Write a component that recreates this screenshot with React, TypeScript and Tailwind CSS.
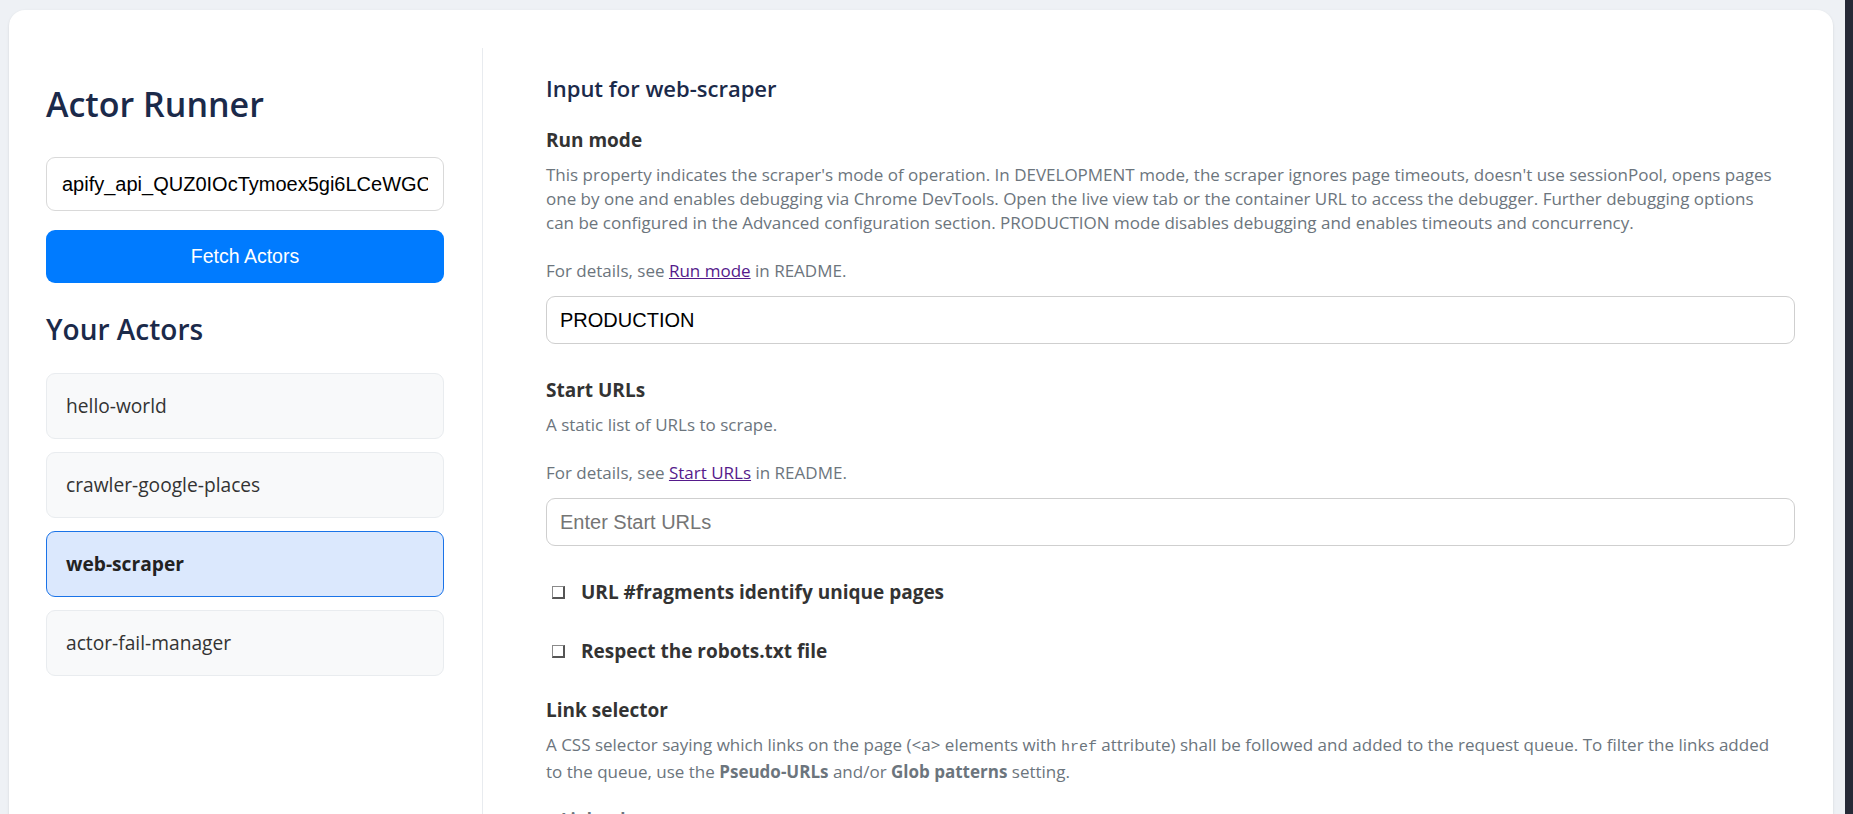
import React, { useState } from "react";

const actors = [
  "hello-world",
  "crawler-google-places",
  "web-scraper",
  "actor-fail-manager",
];

const sans = "font-['Segoe_UI','Open_Sans',sans-serif]";
const arial = "font-['Liberation_Sans',Arial,sans-serif]";
const mono = "font-['Liberation_Mono',monospace]";

const Checkbox = ({ label }: { label: string }) => (
  <div className="flex items-center h-[27px] mb-[32px]">
    <span className="ml-[6px] w-[13px] h-[13px] border border-[#8a8a8a] border-b-2 border-r-2 border-b-[#555] border-r-[#555] bg-white" />
    <span className="ml-[16px] text-[19px] leading-[27px] font-bold text-[#333]">
      {label}
    </span>
  </div>
);

const App = () => {
  const [selected, setSelected] = useState("web-scraper");

  return (
    <div className={`${sans} flex h-screen overflow-hidden bg-[#eef1f5]`}>
      <div className="flex-1 pt-[10px] pl-[9px] pr-[12px] overflow-hidden">
        <div className="h-[900px] bg-white rounded-t-[16px] shadow-sm pt-[38px] flex">
          {/* left column */}
          <aside className="w-[474px] shrink-0 pl-[37px] pr-[38px] pt-[33px] border-r border-[#e8ebef]">
            <h1 className="text-[34px] leading-[46px] font-semibold text-[#1b2a4a]">
              Actor Runner
            </h1>
            <input
              readOnly
              value="apify_api_QUZ0IOcTymoex5gi6LCeWGCxY8s2Nd3kF7pQ"
              className={`${arial} mt-[30px] w-full h-[54px] px-[15px] text-[20px] text-black border border-[#d9d9d9] rounded-[9px] outline-none bg-white`}
            />
            <button
              className={`${arial} mt-[19px] w-full h-[53px] rounded-[9px] bg-[#007bff] text-white text-[19.5px]`}
            >
              Fetch Actors
            </button>
            <h2 className="mt-[28px] text-[28px] leading-[36px] font-semibold text-[#1b2a4a]">
              Your Actors
            </h2>
            <div className="mt-[26px] flex flex-col gap-[13px]">
              {actors.map((name) => (
                <div
                  key={name}
                  onClick={() => setSelected(name)}
                  className={`${
                    selected === name
                      ? "bg-[#dbe8fd] border-[#1a73e8] font-bold text-[#222]"
                      : "bg-[#f8f9fa] border-[#e9ecef] text-[#333]"
                  } h-[66px] flex items-center px-[19px] border rounded-[9px] text-[19.2px] cursor-pointer`}
                >
                  {name}
                </div>
              ))}
            </div>
          </aside>

          {/* right column */}
          <main className="flex-1 min-w-0 pl-[63px] pr-[38px] pt-[27px]">
            <h2 className="text-[22px] leading-[26px] font-semibold text-[#1b2a4a]">
              Input for web-scraper
            </h2>

            <div className="mt-[26px] mb-[33px]">
              <div className="text-[19px] leading-[27px] font-bold text-[#333]">
                Run mode
              </div>
              <p className="mt-[9px] max-w-[1232px] text-[17px] leading-[24px] text-[#6c757d]">
                This property indicates the scraper's mode of operation. In
                DEVELOPMENT mode, the scraper ignores page timeouts, doesn't use
                sessionPool, opens pages one by one and enables debugging via
                Chrome DevTools. Open the live view tab or the container URL to
                access the debugger. Further debugging options can be configured
                in the Advanced configuration section. PRODUCTION mode disables
                debugging and enables timeouts and concurrency.
                <br />
                <br />
                For details, see{" "}
                <a href="#" className="text-[#551a8b] underline">
                  Run mode
                </a>{" "}
                in README.
              </p>
              <input
                readOnly
                value="PRODUCTION"
                className={`${arial} mt-[13px] w-full h-[48px] px-[13px] text-[20px] text-black border border-[#cfcfcf] rounded-[9px] outline-none`}
              />
            </div>

            <div className="mb-[33px]">
              <div className="text-[19px] leading-[27px] font-bold text-[#333]">
                Start URLs
              </div>
              <p className="mt-[9px] text-[17px] leading-[24px] text-[#6c757d]">
                A static list of URLs to scrape.
                <br />
                <br />
                For details, see{" "}
                <a href="#" className="text-[#551a8b] underline">
                  Start URLs
                </a>{" "}
                in README.
              </p>
              <input
                placeholder="Enter Start URLs"
                className={`${arial} mt-[13px] w-full h-[48px] px-[13px] text-[20px] text-black placeholder:text-[#757575] border border-[#cfcfcf] rounded-[9px] outline-none`}
              />
            </div>

            <Checkbox label="URL #fragments identify unique pages" />
            <Checkbox label="Respect the robots.txt file" />

            <div>
              <div className="text-[19px] leading-[27px] font-bold text-[#333]">
                Link selector
              </div>
              <p className="mt-[9px] max-w-[1232px] text-[17px] leading-[24px] text-[#6c757d]">
                A CSS selector saying which links on the page (&lt;a&gt;
                elements with <code className={`${mono} text-[15px]`}>href</code>{" "}
                attribute) shall be followed and added to the request queue. To
                filter the links added to the queue, use the{" "}
                <b>Pseudo-URLs</b> and/or <b>Glob patterns</b> setting.
                <br />
                <br />
                If <b>Link selector</b> is empty, the page links are ignored.
              </p>
            </div>
          </main>
        </div>
      </div>
      <div className="w-[8px] shrink-0 bg-[#262a37]" />
    </div>
  );
};

export default App;
